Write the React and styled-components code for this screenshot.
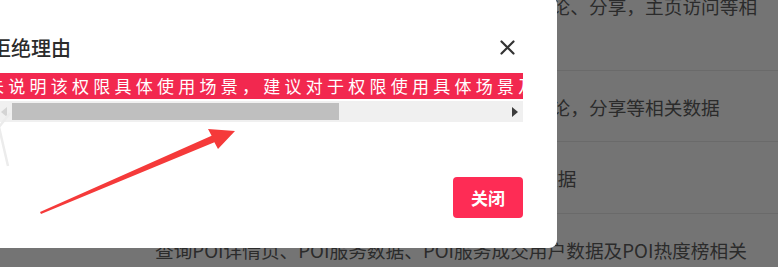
import React from "react";
import styled, { createGlobalStyle } from "styled-components";

const Global = createGlobalStyle`
  html, body { margin: 0; padding: 0; background: #fff; }
  body { width: 778px; height: 267px; overflow: hidden; font-family: "Noto Sans CJK SC", "Noto Sans", sans-serif; }
  * { box-sizing: border-box; }
`;

const Page = styled.div`
  position: relative;
  width: 778px;
  height: 267px;
  overflow: hidden;
  background: #fff;
`;

const RowList = styled.div`
  display: flex;
  flex-direction: column;
  margin-top: -59px;
`;

const Row = styled.div`
  height: ${(p) => p.$h}px;
  display: flex;
  align-items: center;
  padding-left: 155px;
  border-bottom: 1px solid #e8e8e8;
`;

const RowText = styled.div`
  width: 603px;
  overflow: hidden;
  white-space: nowrap;
  font-size: 18.7px;
  color: #5f5f5f;
`;

const Mask = styled.div`
  position: absolute;
  inset: 0;
  background: rgba(0, 0, 0, 0.545);
`;

const Modal = styled.div`
  position: absolute;
  left: -39px;
  top: -4px;
  width: 596px;
  height: 252px;
  background: #fff;
  border-radius: 8px;
  padding: 37px 34px 30px 34px;
  display: flex;
  flex-direction: column;
`;

const Header = styled.div`
  height: 28px;
  display: flex;
  align-items: center;
  justify-content: space-between;
`;

const Title = styled.div`
  margin-left: -4px;
  font-size: 20px;
  font-weight: 500;
  color: #2b2b2b;
`;

const CloseBtn = styled.div`
  width: 24px;
  height: 24px;
  margin-right: 4px;
  display: flex;
  align-items: center;
  justify-content: center;
`;

const ScrollBox = styled.div`
  margin-top: 12px;
  display: flex;
  flex-direction: column;
`;

const HighlightLine = styled.div`
  height: 26px;
  line-height: 26px;
  background: #f2284f;
  color: #fff;
  font-size: 17px;
  letter-spacing: 4.25px;
  white-space: nowrap;
  overflow: hidden;
  text-indent: -8px;
`;

const Scrollbar = styled.div`
  margin-top: 2px;
  height: 21px;
  background: #f0f0f0;
  display: flex;
`;

const ScrollArrow = styled.div`
  width: 17px;
  display: flex;
  align-items: center;
  justify-content: center;
  &::after {
    content: "";
    width: 0;
    height: 0;
    border-top: 5px solid transparent;
    border-bottom: 5px solid transparent;
    ${(p) =>
      p.$dir === "left"
        ? `border-right: 6px solid ${p.$disabled ? "#d4d4d4" : "#3c3c3c"};`
        : `border-left: 6px solid ${p.$disabled ? "#d4d4d4" : "#3c3c3c"};`}
  }
`;

const Thumb = styled.div`
  width: 327px;
  margin: 2px 0;
  background: #bfbfbf;
`;

const Spacer = styled.div`
  flex: 1;
`;

const Footer = styled.div`
  margin-top: auto;
  display: flex;
  justify-content: flex-end;
`;

const Button = styled.div`
  width: 70px;
  height: 41px;
  border-radius: 4px;
  background: #fe2c55;
  color: #fff;
  font-size: 17px;
  font-weight: 600;
  display: flex;
  align-items: center;
  justify-content: center;
`;

const Annotation = styled.svg`
  position: absolute;
  left: 0;
  top: 0;
  pointer-events: none;
`;

export default function App() {
  return (
    <Page>
      <Global />
      <RowList>
        <Row $h={130}>
          <RowText>获取用户在抖音发布的视频及视频下的点赞、 评论、分享，主页访问等相关数据</RowText>
        </Row>
        <Row $h={71}>
          <RowText>获取用户在抖音发布的视频及视频下的点赞、 评论，分享等相关数据</RowText>
        </Row>
        <Row $h={72}>
          <RowText>获取用户近1个月的视频播放量、点赞、评论等数据</RowText>
        </Row>
        <Row $h={72}>
          <RowText>查询POI详情页、POI服务数据、POI服务成交用户数据及POI热度榜相关</RowText>
        </Row>
      </RowList>
      <Mask />
      <Modal>
        <Header>
          <Title>拒绝理由</Title>
          <CloseBtn>
            <svg width="15" height="15" viewBox="0 0 15 15">
              <path d="M1.5 1.5 L13.5 13.5 M13.5 1.5 L1.5 13.5" stroke="#333" strokeWidth="2.2" strokeLinecap="round" />
            </svg>
          </CloseBtn>
        </Header>
        <ScrollBox>
          <HighlightLine>未说明该权限具体使用场景，建议对于权限使用具体场景及使用方式进行详细说明</HighlightLine>
          <Scrollbar>
            <ScrollArrow $dir="left" $disabled />
            <Thumb />
            <Spacer />
            <ScrollArrow $dir="right" />
          </Scrollbar>
        </ScrollBox>
        <Footer>
          <Button>关闭</Button>
        </Footer>
      </Modal>
      <Annotation width="778" height="267" viewBox="0 0 778 267">
        <polyline points="10,113 -1,127 8,166" fill="none" stroke="#ececec" strokeWidth="2.5" strokeLinejoin="round" />
        <polygon
          points="40,212 41,214 214.4,142.2 218,149 235,131 208,129 211.6,135.8"
          fill="#f53a3a"
        />
      </Annotation>
    </Page>
  );
}
